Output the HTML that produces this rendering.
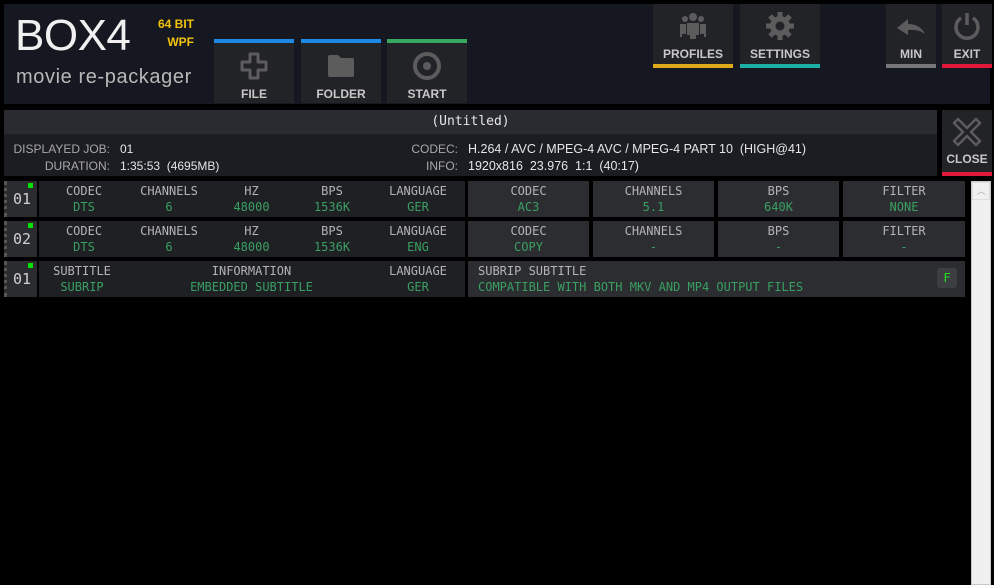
<!DOCTYPE html>
<html><head><meta charset="utf-8"><style>
*{margin:0;padding:0;box-sizing:border-box}
body{width:994px;height:585px;background:#000;position:relative;overflow:hidden;font-family:"Liberation Sans","DejaVu Sans",sans-serif}
.a{position:absolute}
.btn{position:absolute;background:#222327;color:#c8c8c8;font-size:12px;font-weight:bold;text-align:center}
.btn span{position:absolute;left:0;right:0}
.mono{font-family:"DejaVu Sans Mono","Liberation Mono",monospace}
.lab{color:#b4b4b4;font-size:12px}
.val{color:#3a9f62;font-size:12px}
.cell{position:absolute;text-align:center;line-height:16px}
.num{position:absolute;left:4px;width:33px;height:36px;background:#2b2c30;border-left:3px dotted #555;color:#d0d0d0;font-size:15px;line-height:36px;text-align:center}
.gsq{position:absolute;right:4px;top:2px;width:5px;height:5px;background:#00e000}
.left{position:absolute;left:39px;width:426px;height:36px;background:#1f2024}
.rc{position:absolute;height:36px;background:#2c2d31;text-align:center;line-height:16px;padding-top:2px}
</style></head><body>
<div class="a" style="left:4px;top:4px;width:986px;height:100px;background:#151820"></div>
<div class="a" style="left:15px;top:11px;font-size:44px;color:#f0f0f0;letter-spacing:-0.5px">BOX4</div>
<div class="a" style="left:16px;top:66px;font-size:20px;color:#b8b8b8;letter-spacing:0.6px">movie re-packager</div>
<div class="a" style="left:150px;top:15px;width:44px;text-align:right;font-size:12px;font-weight:bold;color:#f2c20f;line-height:18px">64 BIT<br>WPF</div>

<div class="a" style="left:214px;top:39px;width:80px;height:4px;background:#1e88e5"></div>
<div class="btn" style="left:214px;top:43px;width:80px;height:60px"><svg class="a" style="left:25px;top:8px" width="30" height="30" viewBox="0 0 30 30"><path d="M11 3h8v8h8v8h-8v8h-8v-8H3v-8h8z" fill="none" stroke="#5c5c5c" stroke-width="3" stroke-linejoin="round"/></svg><span style="top:44px">FILE</span></div>
<div class="a" style="left:301px;top:39px;width:80px;height:4px;background:#1e88e5"></div>
<div class="btn" style="left:301px;top:43px;width:80px;height:60px"><svg class="a" style="left:25px;top:10px" width="30" height="26" viewBox="0 0 30 26"><path d="M2 4q0-2 2-2h8l3 3h11q2 0 2 2v15q0 2-2 2H4q-2 0-2-2z" fill="#5c5c5c"/></svg><span style="top:44px">FOLDER</span></div>
<div class="a" style="left:387px;top:39px;width:80px;height:4px;background:#38a860"></div>
<div class="btn" style="left:387px;top:43px;width:80px;height:60px"><svg class="a" style="left:25px;top:8px" width="30" height="30" viewBox="0 0 30 30"><circle cx="15" cy="15" r="12" fill="none" stroke="#5c5c5c" stroke-width="4"/><circle cx="15" cy="15" r="4" fill="#5c5c5c"/></svg><span style="top:44px">START</span></div>

<div class="btn" style="left:653px;top:4px;width:80px;height:60px"><svg class="a" style="left:25px;top:8px" width="30" height="28" viewBox="0 0 30 28"><g fill="#5c5c5c"><circle cx="15" cy="5" r="4"/><circle cx="7" cy="7" r="3"/><circle cx="23" cy="7" r="3"/><path d="M9 11h12v12h-3v4h-6v-4H9z"/><path d="M2 12h6v10H4v3H2z"/><path d="M22 12h6v13h-2v-3h-4z"/></g></svg><span style="top:43px">PROFILES</span></div>
<div class="a" style="left:653px;top:64px;width:80px;height:4px;background:#e0a91a"></div>
<div class="btn" style="left:740px;top:4px;width:80px;height:60px"><svg class="a" style="left:25px;top:7px" width="30" height="30" viewBox="0 0 30 30"><g fill="#5c5c5c"><circle cx="15" cy="15" r="10"/><g stroke="#5c5c5c" stroke-width="5"><path d="M15 1v28M1 15h28M5 5l20 20M25 5L5 25"/></g></g><circle cx="15" cy="15" r="4.5" fill="#222327"/></svg><span style="top:43px">SETTINGS</span></div>
<div class="a" style="left:740px;top:64px;width:80px;height:4px;background:#1bb0a4"></div>
<div class="btn" style="left:886px;top:4px;width:50px;height:60px"><svg class="a" style="left:10px;top:12px" width="30" height="22" viewBox="0 0 30 22"><path d="M1 12L12 3v5q12 0 17 10q-6-5-17-4v5z" fill="#5c5c5c"/></svg><span style="top:43px">MIN</span></div>
<div class="a" style="left:886px;top:64px;width:50px;height:4px;background:#777"></div>
<div class="btn" style="left:942px;top:4px;width:50px;height:60px"><svg class="a" style="left:11px;top:7px" width="28" height="30" viewBox="0 0 28 30"><path d="M8 7a11 11 0 1 0 12 0" fill="none" stroke="#5c5c5c" stroke-width="3.5"/><path d="M14 2v12" stroke="#5c5c5c" stroke-width="3.5"/></svg><span style="top:43px">EXIT</span></div>
<div class="a" style="left:942px;top:64px;width:50px;height:4px;background:#e0183c"></div>

<div class="a mono" style="left:4px;top:110px;width:933px;height:24px;background:#2a2b30;color:#e6e6e6;font-size:13px;text-align:center;line-height:24px">(Untitled)</div>
<div class="a" style="left:4px;top:134px;width:933px;height:42px;background:#1b1d22"></div>
<div class="a" style="left:4px;top:141px;width:106px;text-align:right;font-size:12px;color:#a8a8a8;line-height:17px">DISPLAYED JOB:<br>DURATION:</div>
<div class="a" style="left:120px;top:141px;font-size:12px;color:#e6e6e6;line-height:17px">01<br>1:35:53&nbsp; (4695MB)</div>
<div class="a" style="left:380px;top:141px;width:78px;text-align:right;font-size:12px;color:#a8a8a8;line-height:17px">CODEC:<br>INFO:</div>
<div class="a" style="left:468px;top:141px;font-size:12.5px;color:#e6e6e6;line-height:17px">H.264 / AVC / MPEG-4 AVC / MPEG-4 PART 10&nbsp; (HIGH@41)<br>1920x816&nbsp; 23.976&nbsp; 1:1&nbsp; (40:17)</div>
<div class="btn" style="left:942px;top:110px;width:50px;height:62px;background:#222327"><svg class="a" style="left:10px;top:7px" width="30" height="30" viewBox="0 0 30 30"><path d="M6 2l9 9 9-9 4 4-9 9 9 9-4 4-9-9-9 9-4-4 9-9-9-9z" fill="none" stroke="#5c5c5c" stroke-width="2.5" stroke-linejoin="round"/></svg><span style="top:42px">CLOSE</span></div>
<div class="a" style="left:942px;top:172px;width:50px;height:4px;background:#e0183c"></div>

<div class="num mono" style="top:181px">01<div class="gsq"></div></div>
<div class="left mono" style="top:181px">
<div class="cell" style="left:10px;width:70px;top:2px"><div class="lab">CODEC</div><div class="val">DTS</div></div>
<div class="cell" style="left:90px;width:80px;top:2px"><div class="lab">CHANNELS</div><div class="val">6</div></div>
<div class="cell" style="left:180px;width:65px;top:2px"><div class="lab">HZ</div><div class="val">48000</div></div>
<div class="cell" style="left:258px;width:70px;top:2px"><div class="lab">BPS</div><div class="val">1536K</div></div>
<div class="cell" style="left:340px;width:78px;top:2px"><div class="lab">LANGUAGE</div><div class="val">GER</div></div></div>
<div class="rc mono" style="top:181px;left:468px;width:121px"><div class="lab">CODEC</div><div class="val">AC3</div></div>
<div class="rc mono" style="top:181px;left:593px;width:121px"><div class="lab">CHANNELS</div><div class="val">5.1</div></div>
<div class="rc mono" style="top:181px;left:718px;width:121px"><div class="lab">BPS</div><div class="val">640K</div></div>
<div class="rc mono" style="top:181px;left:843px;width:122px"><div class="lab">FILTER</div><div class="val">NONE</div></div>
<div class="num mono" style="top:221px">02<div class="gsq"></div></div>
<div class="left mono" style="top:221px">
<div class="cell" style="left:10px;width:70px;top:2px"><div class="lab">CODEC</div><div class="val">DTS</div></div>
<div class="cell" style="left:90px;width:80px;top:2px"><div class="lab">CHANNELS</div><div class="val">6</div></div>
<div class="cell" style="left:180px;width:65px;top:2px"><div class="lab">HZ</div><div class="val">48000</div></div>
<div class="cell" style="left:258px;width:70px;top:2px"><div class="lab">BPS</div><div class="val">1536K</div></div>
<div class="cell" style="left:340px;width:78px;top:2px"><div class="lab">LANGUAGE</div><div class="val">ENG</div></div></div>
<div class="rc mono" style="top:221px;left:468px;width:121px"><div class="lab">CODEC</div><div class="val">COPY</div></div>
<div class="rc mono" style="top:221px;left:593px;width:121px"><div class="lab">CHANNELS</div><div class="val">-</div></div>
<div class="rc mono" style="top:221px;left:718px;width:121px"><div class="lab">BPS</div><div class="val">-</div></div>
<div class="rc mono" style="top:221px;left:843px;width:122px"><div class="lab">FILTER</div><div class="val">-</div></div>
<div class="num mono" style="top:261px">01<div class="gsq"></div></div>
<div class="left mono" style="top:261px">
<div class="cell" style="left:8px;width:70px;top:2px"><div class="lab">SUBTITLE</div><div class="val">SUBRIP</div></div>
<div class="cell" style="left:120px;width:185px;top:2px"><div class="lab">INFORMATION</div><div class="val">EMBEDDED SUBTITLE</div></div>
<div class="cell" style="left:340px;width:78px;top:2px"><div class="lab">LANGUAGE</div><div class="val">GER</div></div></div>
<div class="rc mono" style="top:261px;left:468px;width:497px;text-align:left;padding-left:10px"><div class="lab">SUBRIP SUBTITLE</div><div class="val">COMPATIBLE WITH BOTH MKV AND MP4 OUTPUT FILES</div>
<div class="a" style="right:8px;top:7px;width:20px;height:20px;background:#3d3e42;border-radius:3px;color:#20e020;font-size:12px;text-align:center;line-height:20px">F</div></div>

<div class="a" style="left:971px;top:181px;width:20px;height:404px;background:#f0f0f0;border:1px solid #c8c8c8"></div>
<div class="a" style="left:972px;top:182px;width:18px;height:18px;border:1px solid #ddd;color:#aaa;font-size:9px;text-align:center;line-height:16px">︿</div>
</body></html>
